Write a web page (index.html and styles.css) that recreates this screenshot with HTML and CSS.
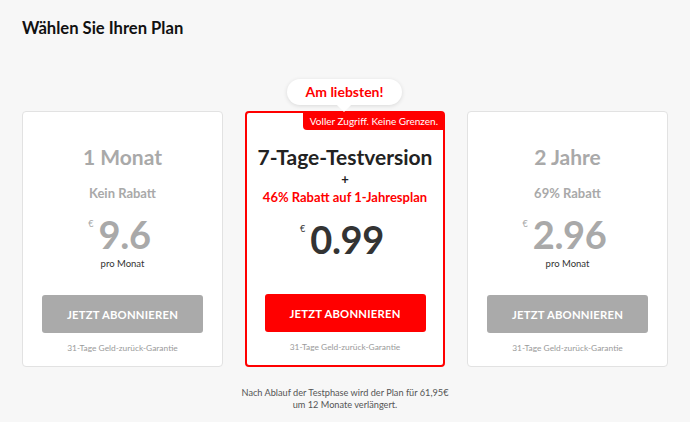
FILE: index.html
```html
<!DOCTYPE html>
<html lang="de">
<head>
<meta charset="utf-8">
<link rel="stylesheet" href="styles.css">
</head>
<body>
<div class="page">
  <h1 class="title">Wählen Sie Ihren Plan</h1>
  <div class="plans">
    <div class="card">
      <div class="plan-name">1 Monat</div>
      <div class="plan-sub">Kein Rabatt</div>
      <div class="price"><span class="cur">€</span><span class="amount">9.6</span></div>
      <div class="per">pro Monat</div>
      <div class="cta">
        <div class="btn">JETZT ABONNIEREN</div>
        <div class="guarantee">31-Tage Geld-zurück-Garantie</div>
      </div>
    </div>
    <div class="card featured">
      <div class="badge">Am liebsten!</div>
      <div class="tag">Voller Zugriff. Keine Grenzen.</div>
      <div class="plan-name">7-Tage-Testversion</div>
      <div class="plus">+</div>
      <div class="plan-sub">46% Rabatt auf 1-Jahresplan</div>
      <div class="price"><span class="cur">€</span><span class="amount">0.99</span></div>
      <div class="cta">
        <div class="btn">JETZT ABONNIEREN</div>
        <div class="guarantee">31-Tage Geld-zurück-Garantie</div>
      </div>
    </div>
    <div class="card">
      <div class="plan-name">2 Jahre</div>
      <div class="plan-sub">69% Rabatt</div>
      <div class="price"><span class="cur">€</span><span class="amount">2.96</span></div>
      <div class="per">pro Monat</div>
      <div class="cta">
        <div class="btn">JETZT ABONNIEREN</div>
        <div class="guarantee">31-Tage Geld-zurück-Garantie</div>
      </div>
    </div>
  </div>
  <p class="note">Nach Ablauf der Testphase wird der Plan für 61,95€<br>um 12 Monate verlängert.</p>
</div>
</body>
</html>
```
FILE: styles.css
```css
* { box-sizing: border-box; }
html, body { margin: 0; padding: 0; background: #f7f7f7; }
body { font-family: "Lato", "Open Sans", sans-serif; color: #222; }
.page { padding: 17px 22px 0 22px; width: 690px; }
.title { margin: 0; font-size: 16.6px; line-height: 22px; font-weight: 700; color: #111; }
.plans { display: flex; gap: 22px; margin-top: 72px; }
.card {
  position: relative;
  width: 201px; height: 256px;
  background: #fff;
  border: 1px solid #e2e2e2;
  border-radius: 4px;
  display: flex; flex-direction: column; align-items: center;
  padding: 32px 0 12px;
  color: #a9a9a9;
}
.card.featured { border: 2px solid #ff0000; width: 200px; padding-top: 31px; color: #222; }
.plan-name { font-size: 21px; line-height: 26px; font-weight: 700; }
.featured .plan-name { font-size: 21px; color: #222; }
.plan-sub { margin-top: 15px; font-size: 13px; line-height: 16px; font-weight: 700; }
.featured .plan-sub { margin-top: 2px; color: #ff0000; }
.plus { margin-top: 1px; font-size: 13px; line-height: 16px; font-weight: 700; color: #222; }
.price { margin-top: 13px; display: flex; align-items: flex-start; line-height: 40px; height: 40px; margin-left: -6px; }
.featured .price { margin-top: 14px; color: #333; }
.cur { font-size: 9px; line-height: 12px; margin-top: 4px; margin-right: 5px; font-weight: 400; }
.amount { font-size: 38px; font-weight: 700; letter-spacing: -0.3px; }
.per { margin-top: 3px; font-size: 9.5px; line-height: 13px; color: #333; }
.cta { margin-top: auto; display: flex; flex-direction: column; align-items: center; }
.btn {
  width: 161px; height: 38px; border-radius: 3px;
  background: #aaaaaa; color: #fff;
  font-size: 11.3px; font-weight: 700; letter-spacing: 0.2px;
  display: flex; align-items: center; justify-content: center;
}
.featured .btn { background: #ff0000; }
.guarantee { margin-top: 9px; font-size: 8.4px; line-height: 12px; color: #9a9a9a; }
.badge {
  position: absolute; top: -34px; left: 40px;
  width: 115px; height: 26px; border-radius: 13px;
  background: #fff; color: #ff0000;
  font-size: 14px; font-weight: 700; line-height: 26px; text-align: center;
  box-shadow: 0 1px 4px rgba(0,0,0,0.12);
}
.badge::after {
  content: ""; position: absolute; left: 52px; bottom: -5px;
  width: 10px; height: 10px; background: #fff; transform: rotate(45deg);
}
.tag {
  position: absolute; top: -1px; right: -1px;
  height: 18px; padding: 0 6px 0 7px;
  background: #ff0000; color: #fff;
  font-size: 10px; line-height: 18px;
  border-bottom-left-radius: 4px;
}
.note { margin: 20px 0 0; text-align: center; font-size: 9.2px; line-height: 12px; color: #555; }
```
